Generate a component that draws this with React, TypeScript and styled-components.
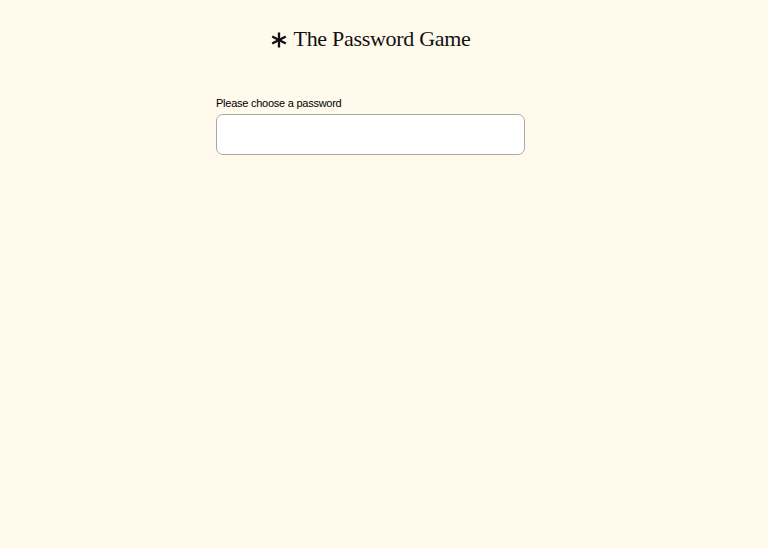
import { createGlobalStyle, styled } from "styled-components";

const GlobalStyle = createGlobalStyle`
  html, body {
    margin: 0;
    padding: 0;
    background: #fffaeb;
  }
  body {
    font-family: "Liberation Sans", Arial, sans-serif;
    color: #000;
  }
`;

function Asterisk() {
  return (
    <svg width="16" height="16" viewBox="0 0 16 16" aria-hidden>
      <g stroke="#111" strokeWidth="2.3" strokeLinecap="butt">
        <line x1="8" y1="0.5" x2="8" y2="15.5" />
        <line x1="1.2" y1="4.4" x2="14.8" y2="11.6" />
        <line x1="1.2" y1="11.6" x2="14.8" y2="4.4" />
      </g>
    </svg>
  );
}

export default function App() {
  return (
    <>
      <GlobalStyle />
      <Page>
        <Title>
          <Asterisk />
          <span>The Password Game</span>
        </Title>
        <Form>
          <Label htmlFor="pw">Please choose a password</Label>
          <Box id="pw" />
        </Form>
      </Page>
    </>
  );
}

const Page = styled.div`
  display: flex;
  flex-direction: column;
  align-items: center;
  padding: 25px 27px 0 0;
  min-height: 548px;
  box-sizing: border-box;
`;

const Title = styled.h1`
  margin: 0;
  display: flex;
  align-items: center;
  gap: 7px;
  font-family: "Liberation Serif", "Times New Roman", serif;
  font-weight: 400;
  font-size: 22px;
  line-height: 28px;
  letter-spacing: -0.3px;
  color: #111;

  svg {
    margin-top: 1px;
  }
`;

const Form = styled.div`
  margin-top: 43px;
  width: 309px;
  display: flex;
  flex-direction: column;
`;

const Label = styled.label`
  font-size: 11px;
  line-height: 14px;
  letter-spacing: -0.25px;
  margin-bottom: 4px;
`;

const Box = styled.div`
  height: 39px;
  background: #fff;
  border: 1px solid #a8a8a8;
  border-radius: 7px;
`;
